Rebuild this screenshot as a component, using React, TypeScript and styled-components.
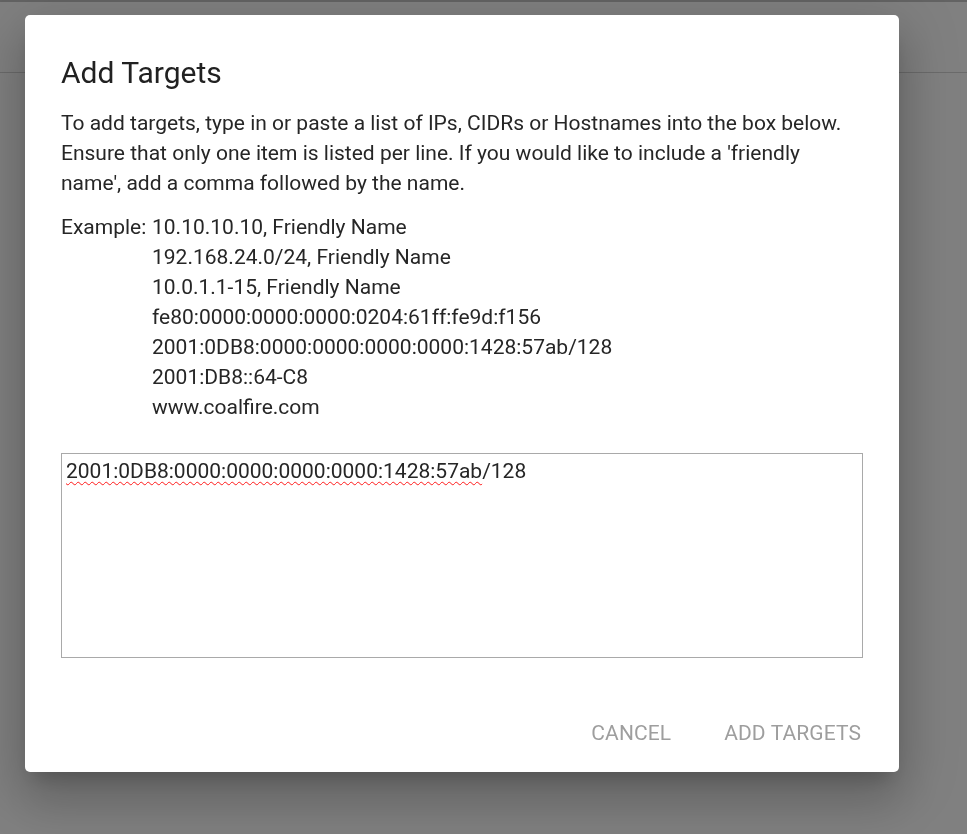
import React from 'react';
import styled, { createGlobalStyle } from 'styled-components';

const GlobalStyle = createGlobalStyle`
    html, body {
        margin: 0;
        padding: 0;
        height: 100%;
        background: #808080;
        font-family: Roboto, "Liberation Sans", sans-serif;
    }
`

const Page = styled.div`
    width: 967px;
    height: 834px;
    display: flex;
    flex-direction: column;
    background: #808080;
    overflow: hidden;
`

const PageTop = styled.div`
    height: 2px;
    background: #636363;
`

const PageHeader = styled.div`
    height: 70px;
    border-bottom: 1px solid #6b6b6b;
`

const Overlay = styled.div`
    position: fixed;
    inset: 0;
    display: flex;
    align-items: flex-start;
    padding: 15px 0 0 25px;
`

const Dialog = styled.div`
    width: 874px;
    height: 757px;
    box-sizing: border-box;
    background: #fff;
    border-radius: 5px;
    padding: 0 36px;
    display: flex;
    flex-direction: column;
    box-shadow: 0 14px 19px -9px rgba(0, 0, 0, 0.2),
        0 30px 48px 4px rgba(0, 0, 0, 0.14),
        0 11px 58px 10px rgba(0, 0, 0, 0.12);
`

const Title = styled.h2`
    margin: 42px 0 0;
    font-size: 30px;
    line-height: 32px;
    font-weight: 400;
    color: #212121;
`

const Text = styled.p`
    margin: 19px 0 0;
    font-size: 21px;
    line-height: 30px;
    color: #262626;
`

const Example = styled.div`
    margin-top: 14px;
    display: grid;
    grid-template-columns: 91px auto;
    font-size: 21px;
    line-height: 30px;
    color: #262626;
`

const ExampleLines = styled.div`
    display: flex;
    flex-direction: column;
`

const TextBox = styled.div`
    margin-top: 31px;
    height: 205px;
    box-sizing: border-box;
    border: 1px solid #a9a9a9;
    padding: 2px 4px;
    font-size: 21px;
    line-height: 30px;
    color: #262626;
`

const Misspelled = styled.span`
    text-decoration: underline wavy #ff1a1a;
    text-decoration-thickness: 1px;
    text-underline-offset: 3px;
`

const Actions = styled.div`
    margin-top: 60px;
    display: flex;
    justify-content: flex-end;
    gap: 53px;
    margin-right: 2px;
`

const ActionButton = styled.button`
    border: none;
    background: none;
    padding: 0;
    font-family: Roboto, "Liberation Sans", sans-serif;
    font-size: 21px;
    line-height: 30px;
    letter-spacing: 0.1px;
    text-transform: uppercase;
    color: #9e9e9e;
    cursor: pointer;
`

const examples = [
    '10.10.10.10, Friendly Name',
    '192.168.24.0/24, Friendly Name',
    '10.0.1.1-15, Friendly Name',
    'fe80:0000:0000:0000:0204:61ff:fe9d:f156',
    '2001:0DB8:0000:0000:0000:0000:1428:57ab/128',
    '2001:DB8::64-C8',
    'www.coalfire.com',
]

function App(): JSX.Element {
    return (
        <>
            <GlobalStyle />
            <Page>
                <PageTop />
                <PageHeader />
            </Page>
            <Overlay>
                <Dialog>
                    <Title>Add Targets</Title>
                    <Text>
                        To add targets, type in or paste a list of IPs, CIDRs or Hostnames into the box below.
                        Ensure that only one item is listed per line. If you would like to include a 'friendly
                        name', add a comma followed by the name.
                    </Text>
                    <Example>
                        <span>Example:</span>
                        <ExampleLines>
                            {examples.map((e, i) => <span key={`ex-${i}`}>{e}</span>)}
                        </ExampleLines>
                    </Example>
                    <TextBox>
                        <Misspelled>2001:0DB8:0000:0000:0000:0000:1428:57ab</Misspelled>/128
                    </TextBox>
                    <Actions>
                        <ActionButton>Cancel</ActionButton>
                        <ActionButton>Add Targets</ActionButton>
                    </Actions>
                </Dialog>
            </Overlay>
        </>
    )
}

export default App
